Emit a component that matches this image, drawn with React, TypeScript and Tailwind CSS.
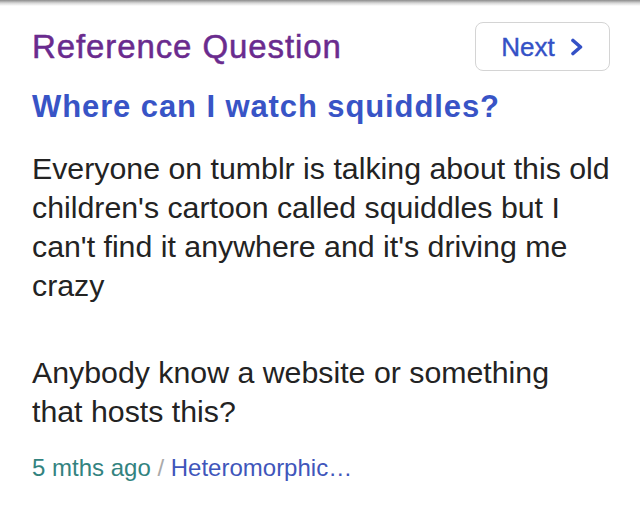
export default function App() {
  return (
    <div className="w-[640px] h-[513px] bg-white relative overflow-hidden" style={{ fontFamily: '"Liberation Sans", Arial, sans-serif' }}>
      <div className="absolute top-0 left-0 right-0 h-[6px] bg-gradient-to-b from-[#8c8c8c] via-[#d6d6d6] to-white" />
      <div className="pl-[32px] pr-[28px] pt-[22px]">
        <div className="flex items-center justify-between pr-[2px]">
          <div className="text-[33px] leading-[34px] text-[#6a2b8e] tracking-[0.9px] [-webkit-text-stroke:0.5px_#6a2b8e]">Reference Question</div>
          <div className="w-[135px] h-[49px] border border-[#d4d4d4] rounded-[8px] flex items-center justify-center gap-[15px] text-[#3451c6] text-[26px] leading-[30px] [-webkit-text-stroke:0.4px_#3451c6]">
            <span>Next</span>
            <svg width="14" height="18" viewBox="0 0 14 18"><path d="M3 2.5 L10.5 9 L3 15.5" fill="none" stroke="#3451c6" strokeWidth="3.6" strokeLinecap="round" strokeLinejoin="round" /></svg>
          </div>
        </div>
        <div className="mt-[18px] text-[31px] leading-[36px] font-bold tracking-[0.9px] text-[#3854c6]">Where can I watch squiddles?</div>
        <div className="mt-[24px] text-[30.3px] leading-[39px] text-[#232323]">
          <p>Everyone on tumblr is talking about this old children's cartoon called squiddles but I can't find it anywhere and it's driving me crazy</p>
          <p className="mt-[48px] max-w-[540px]">Anybody know a website or something that hosts this?</p>
        </div>
        <div className="mt-[23px] text-[24px] leading-[28px]">
          <span className="text-[#33837f]">5 mths ago</span>
          <span className="text-[#aaa]"> / </span>
          <span className="text-[#3f56bb]">Heteromorphic…</span>
        </div>
      </div>
    </div>
  );
}
